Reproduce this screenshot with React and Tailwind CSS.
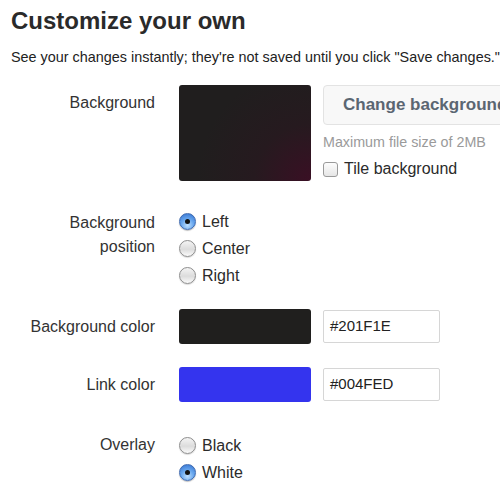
function Radio({ checked }) {
  if (checked) {
    return (
      <span className="relative inline-flex h-[17px] w-[17px] shrink-0 items-center justify-center rounded-full border border-[#3f6ab0] bg-[radial-gradient(circle_at_50%_75%,#bfe0ff_0%,#6aa8ee_45%,#2f6fd0_100%)] shadow-[0_1px_1px_rgba(0,0,0,0.25)]">
        <span className="h-[5px] w-[5px] rounded-full bg-[#111]" />
      </span>
    );
  }
  return (
    <span className="inline-block h-[17px] w-[17px] shrink-0 rounded-full border border-[#8d8d8d] bg-[linear-gradient(180deg,#f4f4f4_0%,#dcdcdc_55%,#fbfbfb_100%)] shadow-[0_1px_1px_rgba(0,0,0,0.15)]" />
  );
}

function RadioGroup({ options, selected }) {
  return (
    <div className="flex flex-col">
      {options.map((opt) => (
        <div key={opt} className="flex h-[27px] items-center gap-[6px]">
          <Radio checked={opt === selected} />
          <span className="text-[16px] text-[#2b2b2b]">{opt}</span>
        </div>
      ))}
    </div>
  );
}

function Label({ children, className = "" }) {
  return (
    <div className={`w-[144px] shrink-0 text-right text-[16px] leading-[24px] text-[#333] ${className}`}>
      {children}
    </div>
  );
}

export default function App() {
  return (
    <div className="h-[500px] w-[500px] overflow-hidden bg-white px-[11px] font-['Liberation_Sans',Arial,sans-serif] text-[#333]">
      <h1 className="pt-[7px] text-[24px] font-bold leading-[28px] text-[#2a2a2a]">Customize your own</h1>
      <p className="mt-[13px] whitespace-nowrap text-[14.4px] leading-[18px] text-[#222]">
        See your changes instantly; they're not saved until you click "Save changes."
      </p>

      {/* background image */}
      <div className="mt-[19px] flex">
        <Label className="pt-[6px]">Background</Label>
        <div className="ml-6 h-[96px] w-[132px] shrink-0 rounded-[3px] bg-[radial-gradient(circle_at_100%_100%,#3a0f24_0%,#261a1f_35%,#201e1e_70%)]" />
        <div className="ml-3 flex flex-col">
          <button className="h-[40px] w-[220px] whitespace-nowrap rounded-[4px] border border-[#e3e3e3] bg-[#f8f8f8] pl-[19px] text-left text-[17px] font-bold text-[#5b6672]">
            Change background
          </button>
          <span className="mt-[8px] whitespace-nowrap text-[14.3px] leading-[18px] text-[#9a9a9a]">Maximum file size of 2MB</span>
          <label className="mt-[8px] flex items-center gap-[6px]">
            <span className="h-[15px] w-[15px] rounded-[3px] border border-[#9a9a9a] bg-[linear-gradient(180deg,#fdfdfd,#e6e6e6)]" />
            <span className="text-[16px] leading-[20px] text-[#2b2b2b]">Tile background</span>
          </label>
        </div>
      </div>

      {/* background position */}
      <div className="mt-[30px] flex">
        <Label className="leading-[24px]">
          Background
          <br />
          position
        </Label>
        <div className="ml-6 -mt-[3px]">
          <RadioGroup options={["Left", "Center", "Right"]} selected="Left" />
        </div>
      </div>

      {/* colours */}
      <div className="mt-[20px] flex items-center">
        <Label>Background color</Label>
        <div className="ml-6 h-[35px] w-[132px] shrink-0 rounded-[3px] bg-[#201f1e]" />
        <div className="ml-3 flex h-[33px] w-[117px] items-center rounded-[2px] border border-[#d6d6d6] pl-[6px] text-[15px] text-[#222]">
          #201F1E
        </div>
      </div>
      <div className="mt-[23px] flex items-center">
        <Label>Link color</Label>
        <div className="ml-6 h-[35px] w-[132px] shrink-0 rounded-[3px] bg-[#3434ee]" />
        <div className="ml-3 flex h-[33px] w-[117px] items-center rounded-[2px] border border-[#d6d6d6] pl-[6px] text-[15px] text-[#222]">
          #004FED
        </div>
      </div>

      {/* overlay */}
      <div className="mt-[30px] flex">
        <Label className="mt-[1px]">Overlay</Label>
        <div className="ml-6">
          <RadioGroup options={["Black", "White"]} selected="White" />
        </div>
      </div>
    </div>
  );
}
